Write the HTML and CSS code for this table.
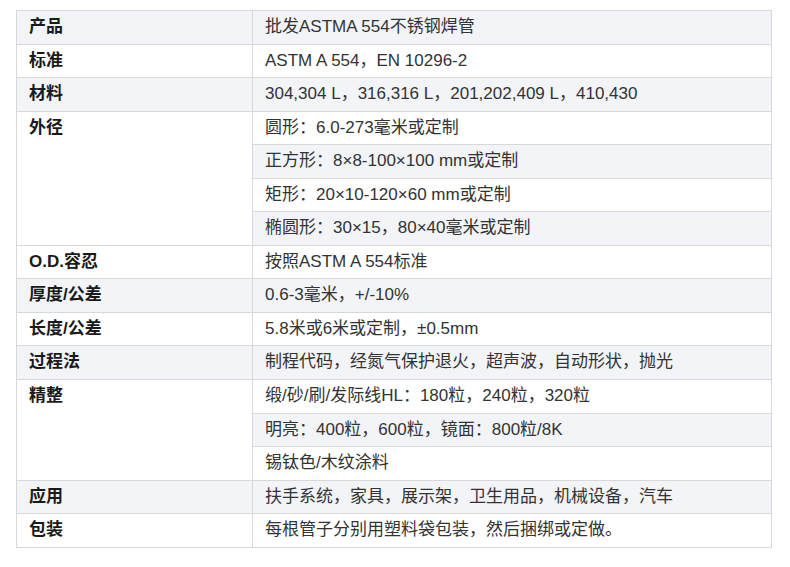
FILE: index.html
```html
<!DOCTYPE html>
<html lang="zh-CN">
<head>
<meta charset="utf-8">
<title>批发ASTMA 554不锈钢焊管</title>
<link rel="stylesheet" href="styles.css">
</head>
<body>
<table class="spec">
  <tbody>
    <tr><th>产品</th><td>批发ASTMA 554不锈钢焊管</td></tr>
    <tr><th>标准</th><td>ASTM A 554，EN 10296-2</td></tr>
    <tr><th>材料</th><td>304,304 L，316,316 L，201,202,409 L，410,430</td></tr>
    <tr><th rowspan="4">外径</th><td>圆形：6.0-273毫米或定制</td></tr>
    <tr><td>正方形：8×8-100×100 mm或定制</td></tr>
    <tr><td>矩形：20×10-120×60 mm或定制</td></tr>
    <tr><td>椭圆形：30×15，80×40毫米或定制</td></tr>
    <tr><th>O.D.容忍</th><td>按照ASTM A 554标准</td></tr>
    <tr><th>厚度/公差</th><td>0.6-3毫米，+/-10%</td></tr>
    <tr><th>长度/公差</th><td>5.8米或6米或定制，±0.5mm</td></tr>
    <tr><th>过程法</th><td>制程代码，经氮气保护退火，超声波，自动形状，抛光</td></tr>
    <tr><th rowspan="3">精整</th><td>缎/砂/刷/发际线HL：180粒，240粒，320粒</td></tr>
    <tr><td>明亮：400粒，600粒，镜面：800粒/8K</td></tr>
    <tr><td>锡钛色/木纹涂料</td></tr>
    <tr><th>应用</th><td>扶手系统，家具，展示架，卫生用品，机械设备，汽车</td></tr>
    <tr><th>包装</th><td>每根管子分别用塑料袋包装，然后捆绑或定做。</td></tr>
  </tbody>
</table>
</body>
</html>
```
FILE: styles.css
```css
html, body {
  margin: 0;
  padding: 0;
  background: #ffffff;
}

body {
  padding: 10px 18px 0 16px;
  font-family: "Liberation Sans", "Noto Sans CJK SC", Arial, sans-serif;
  font-size: 17px;
  color: #333333;
}

.spec {
  width: 756px;
  border-collapse: collapse;
  table-layout: fixed;
}

.spec tr {
  height: 33.56px;
}

.spec tr:nth-child(odd) {
  background: #f2f4f7;
}

.spec th,
.spec td {
  border: 1px solid #d8d8d8;
  padding: 0 12px;
  line-height: 32px;
  vertical-align: top;
  text-align: left;
  white-space: nowrap;
}

.spec th {
  width: 211px;
  font-weight: 700;
  color: #1a1a1a;
}

.spec td {
  font-weight: 400;
}
```
